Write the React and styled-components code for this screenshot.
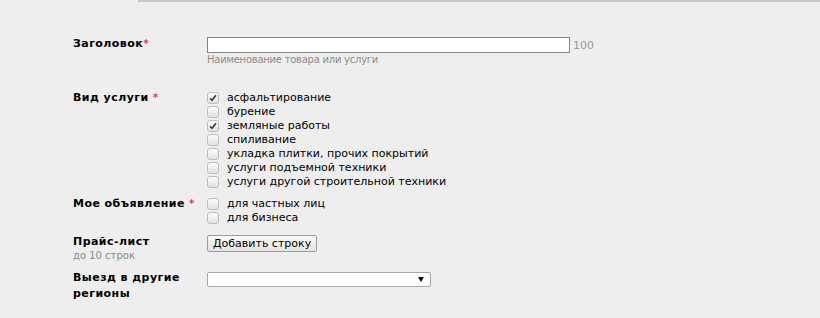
import styled, { createGlobalStyle } from "styled-components";

const GlobalStyle = createGlobalStyle`
  html, body {
    margin: 0;
    padding: 0;
    background: #eeeeee;
  }
  body {
    font-family: "DejaVu Sans", Verdana, sans-serif;
    font-size: 11px;
    color: #000;
  }
`;

const services = [
  { label: "асфальтирование", checked: true },
  { label: "бурение" },
  { label: "земляные работы", checked: true },
  { label: "спиливание" },
  { label: "укладка плитки, прочих покрытий" },
  { label: "услуги подъемной техники" },
  { label: "услуги другой строительной техники" },
];

const audience = [{ label: "для частных лиц" }, { label: "для бизнеса" }];

const Page = styled.div`
  width: 820px;
  height: 318px;
  overflow: hidden;
`;

const TopRule = styled.div`
  margin-left: 138px;
  height: 2px;
  background: #c8c8c8;
`;

const Form = styled.form`
  padding-left: 73px;
  padding-top: 35px;
`;

const Row = styled.div`
  display: grid;
  grid-template-columns: 134px 1fr;
  margin-top: ${({ $gap }) => $gap || 0}px;
`;

const Label = styled.div`
  font-weight: bold;
  letter-spacing: 0.45px;
  line-height: ${({ $lh }) => $lh || 14}px;
  white-space: nowrap;
`;

const Req = styled.span`
  color: #e00000;
  font-weight: normal;
  margin-left: ${({ $space }) => ($space ? 4 : 0)}px;
`;

const SubNote = styled.div`
  font-size: 10px;
  color: #8a8a8a;
  line-height: 14px;
  font-weight: normal;
  letter-spacing: 0;
`;

const Field = styled.div`
  display: flex;
  flex-direction: column;
`;

const InputLine = styled.div`
  display: flex;
  align-items: center;
  gap: 3px;
`;

const TextInput = styled.input`
  box-sizing: border-box;
  width: 363px;
  height: 16px;
  border: 1px solid #858585;
  background: #fff;
  padding: 0 2px;
  margin: 0;
  font: inherit;
`;

const Counter = styled.span`
  color: #9a9a9a;
  font-size: 11px;
`;

const Hint = styled.div`
  font-size: 10px;
  letter-spacing: -0.25px;
  color: #8a8a8a;
  line-height: 13px;
`;

const CheckList = styled.div`
  display: flex;
  flex-direction: column;
`;

const CheckRow = styled.label`
  display: flex;
  align-items: center;
  height: 14px;
  line-height: 14px;
`;

const Box = styled.span`
  box-sizing: border-box;
  width: 12px;
  height: 12px;
  border: 1px solid #bdbdbd;
  border-radius: 3px;
  background: linear-gradient(#fbfbfb, #e2e2e2);
  margin-right: 8px;
  display: flex;
  align-items: center;
  justify-content: center;
`;

const Button = styled.button`
  box-sizing: border-box;
  height: 17px;
  padding: 0 5px;
  border: 1px solid #9c9c9c;
  border-radius: 2px;
  background: linear-gradient(#fafafa, #e4e4e4);
  font: inherit;
  color: #000;
  line-height: 14px;
  align-self: flex-start;
`;

const Select = styled.div`
  box-sizing: border-box;
  width: 224px;
  height: 15px;
  margin-top: 2px;
  border: 1px solid #a8a8a8;
  border-radius: 2px;
  background: #fff;
  display: flex;
  align-items: center;
  justify-content: flex-end;
  padding-right: 6px;
`;

const Arrow = styled.span`
  width: 0;
  height: 0;
  border-left: 3px solid transparent;
  border-right: 3px solid transparent;
  border-top: 5px solid #000;
`;

function Check({ checked }) {
  return (
    <Box>
      {checked && (
        <svg width="8" height="8" viewBox="0 0 8 8">
          <path d="M1 4.2 L3 6.3 L7 1.2" fill="none" stroke="#3a3a3a" strokeWidth="1.6" />
        </svg>
      )}
    </Box>
  );
}

function CheckGroup({ items }) {
  return (
    <CheckList>
      {items.map((it) => (
        <CheckRow key={it.label}>
          <Check checked={it.checked} />
          {it.label}
        </CheckRow>
      ))}
    </CheckList>
  );
}

export default function App() {
  return (
    <Page>
      <GlobalStyle />
      <TopRule />
      <Form>
        <Row>
          <Label>
            Заголовок<Req>*</Req>
          </Label>
          <Field>
            <InputLine>
              <TextInput type="text" />
              <Counter>100</Counter>
            </InputLine>
            <Hint>Наименование товара или услуги</Hint>
          </Field>
        </Row>

        <Row $gap={25}>
          <Label>
            Вид услуги<Req $space>*</Req>
          </Label>
          <CheckGroup items={services} />
        </Row>

        <Row $gap={8}>
          <Label>
            Мое объявление<Req $space>*</Req>
          </Label>
          <CheckGroup items={audience} />
        </Row>

        <Row $gap={10}>
          <Label>
            Прайс-лист
            <SubNote>до 10 строк</SubNote>
          </Label>
          <Field>
            <Button type="button">Добавить строку</Button>
          </Field>
        </Row>

        <Row $gap={7}>
          <Label $lh={16}>
            Выезд в другие
            <br />
            регионы
          </Label>
          <Field>
            <Select>
              <Arrow />
            </Select>
          </Field>
        </Row>
      </Form>
    </Page>
  );
}
